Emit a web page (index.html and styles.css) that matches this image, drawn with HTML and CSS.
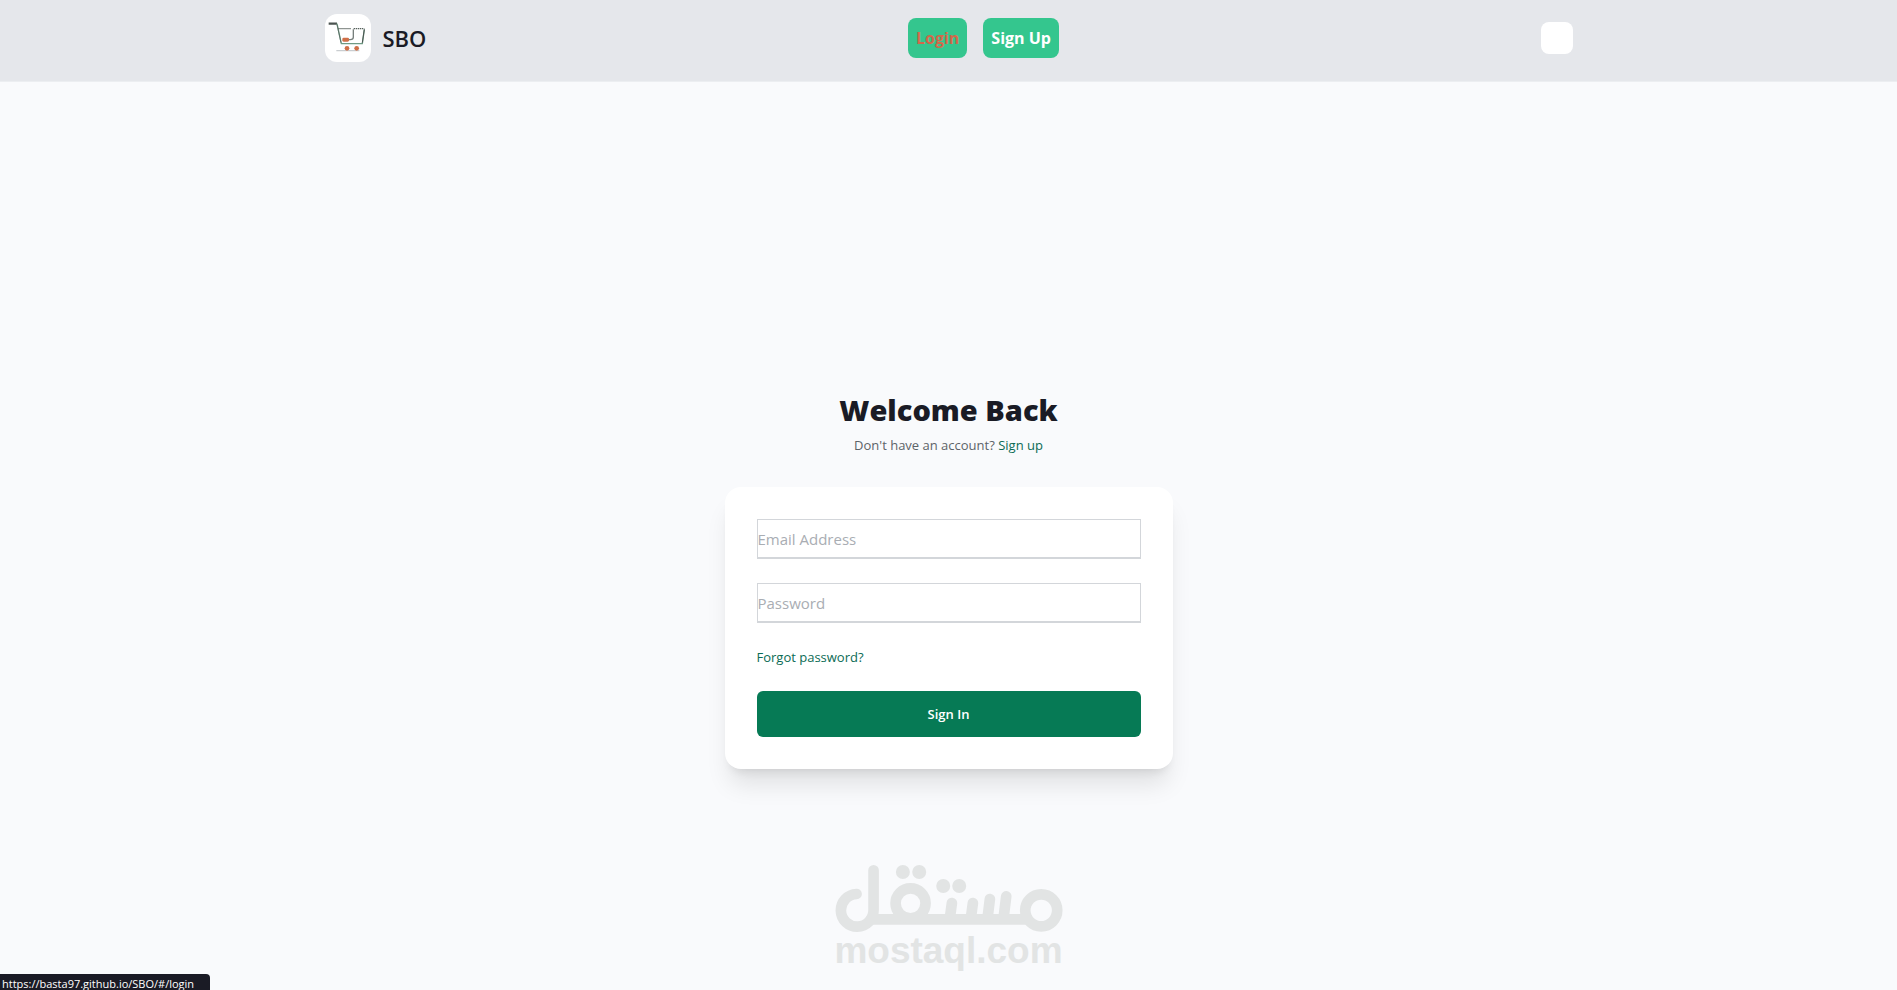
FILE: index.html
```html
<!DOCTYPE html>
<html lang="en">
<head>
<meta charset="utf-8">
<meta name="viewport" content="width=device-width, initial-scale=1">
<title>SBO</title>
<link rel="stylesheet" href="styles.css">
</head>
<body>
<header class="site-header">
  <div class="header-inner">
    <a class="brand" href="#/">
      <svg class="brand-logo" viewBox="0 0 138 144" fill="none" aria-hidden="true">
        <path d="M11 29H36" stroke="#4b5350" stroke-width="7"/>
        <path d="M36 29L49 89H112L118 46" stroke="#6f9a84" stroke-width="4" stroke-linejoin="round"/>
        <path d="M36 32L48 86" stroke="#505b56" stroke-width="2"/>
        <path d="M40 44H78M86 44H118" stroke="#56605b" stroke-width="4" stroke-dasharray="4 2"/>
        <path d="M85 46V70Q85 77 76 77H60" stroke="#777f7c" stroke-width="4"/>
        <path d="M118 46L112 86" stroke="#4b5350" stroke-width="3"/>
        <path d="M34 110H103" stroke="#c9cdd0" stroke-width="4"/>
        <rect x="52" y="71" width="20" height="12" rx="4" fill="#cf6f47"/>
        <circle cx="66" cy="103" r="7" fill="#cf6f47"/>
        <circle cx="95" cy="103" r="7" fill="#cf6f47"/>
      </svg>
      <span class="brand-name">SBO</span>
    </a>
    <nav class="nav">
      <a class="nav-link nav-link-active" href="#/login">Login</a>
      <a class="nav-link" href="#/signup">Sign Up</a>
    </nav>
    <button class="menu-button" type="button" aria-label="Menu"></button>
  </div>
</header>
<main class="main">
  <h1 class="title">Welcome Back</h1>
  <p class="subtitle">Don't have an account? <a class="link" href="#/signup">Sign up</a></p>
  <form class="card">
    <input class="field" type="email" placeholder="Email Address" aria-label="Email Address">
    <input class="field" type="password" placeholder="Password" aria-label="Password">
    <a class="link forgot" href="#/forgot">Forgot password?</a>
    <button class="submit" type="submit">Sign In</button>
  </form>
</main>
<div class="watermark">
  <svg class="watermark-logo" viewBox="42 45 684 201" fill="none" stroke="currentColor" stroke-width="32" stroke-linecap="round" role="img" aria-label="مستقل">
    <path d="M107 132A49 49 0 1 0 158 181V61"/>
    <path d="M150 208H612M556 139L548 204M507 147L500 204M456 159L450 204M393 159L387 204"/>
    <circle cx="269" cy="160" r="45"/>
    <circle cx="661" cy="181" r="48"/>
    <g fill="currentColor" stroke="none">
      <circle cx="246" cy="66" r="21"/><circle cx="295" cy="66" r="21"/>
      <circle cx="367" cy="108" r="21"/><circle cx="415" cy="108" r="21"/>
    </g>
  </svg>
  <span class="watermark-name">mostaql.com</span>
</div>
<div class="status">https://basta97.github.io/SBO/#/login</div>
</body>
</html>
```

FILE: styles.css
```css
* { box-sizing: border-box; }
body {
  margin: 0;
  min-height: 100vh;
  background: #f9fafc;
  color: #1a1b25;
  font-family: "Open Sans", "Noto Sans", sans-serif;
}
a { text-decoration: none; }
.site-header {
  background: #e5e7eb;
  border-bottom: 1px solid #eceef1;
}
.header-inner {
  display: flex;
  align-items: center;
  justify-content: space-between;
  max-width: 1280px;
  margin: 0 auto;
  padding: 14px 16px 19px;
}
.brand {
  display: flex;
  align-items: center;
  gap: 12px;
  color: inherit;
}
.brand-logo {
  width: 46px;
  height: 48px;
  border-radius: 12px;
  background: #fff;
}
.brand-name {
  font-size: 22px;
  font-weight: 600;
  line-height: 32px;
}
.nav { display: flex; gap: 16px; }
.nav-link {
  padding: 8px;
  border-radius: 8px;
  background: #34c68e;
  color: #fff;
  font-size: 16px;
  font-weight: 700;
  line-height: 24px;
}
.nav-link-active { color: #d2694a; }
.menu-button {
  width: 32px;
  height: 32px;
  padding: 0;
  border: 0;
  border-radius: 8px;
  background: #fff;
}
.main {
  display: flex;
  flex-direction: column;
  align-items: center;
  padding: 310px 16px 0;
}
.title {
  margin: 0;
  font-size: 29px;
  font-weight: 800;
  line-height: 36px;
}
.subtitle {
  margin: 7px 0 32px;
  color: #5d6368;
  font-size: 13px;
  line-height: 20px;
}
.link { color: #0b6b55; }
.card {
  display: flex;
  flex-direction: column;
  gap: 24px;
  width: 100%;
  max-width: 448px;
  padding: 32px;
  border-radius: 16px;
  background: #fff;
  box-shadow: 0 20px 25px -5px rgb(0 0 0 / 10%), 0 8px 10px -6px rgb(0 0 0 / 10%);
}
.field {
  width: 100%;
  height: 40px;
  padding: 0;
  border: 1px solid #d3d6da;
  border-bottom-width: 2px;
  border-radius: 0;
  background: #fff;
  color: inherit;
  font: 15px/24px "Open Sans", "Noto Sans", sans-serif;
}
.field::placeholder { color: #a9adb3; opacity: 1; }
.forgot {
  align-self: flex-start;
  font-size: 13px;
  line-height: 20px;
}
.submit {
  height: 46px;
  border: 0;
  border-radius: 6px;
  background: #067a55;
  color: #fff;
  font: 600 13px/20px "Open Sans", "Noto Sans", sans-serif;
}
.watermark {
  position: absolute;
  bottom: 20px;
  left: 50%;
  display: flex;
  flex-direction: column;
  align-items: center;
  color: #e2e4e4;
  transform: translateX(-50%);
}
.watermark-logo { width: 228px; height: 67px; }
.watermark-name {
  font: 700 37px/38px "Liberation Sans", Arial, sans-serif;
}
.status {
  position: fixed;
  bottom: 0;
  left: 0;
  height: 16px;
  padding: 0 16px 0 2px;
  border-top-right-radius: 4px;
  background: #1a1b25;
  color: #fff;
  font-size: 11px;
  line-height: 20px;
  overflow: hidden;
}
```
